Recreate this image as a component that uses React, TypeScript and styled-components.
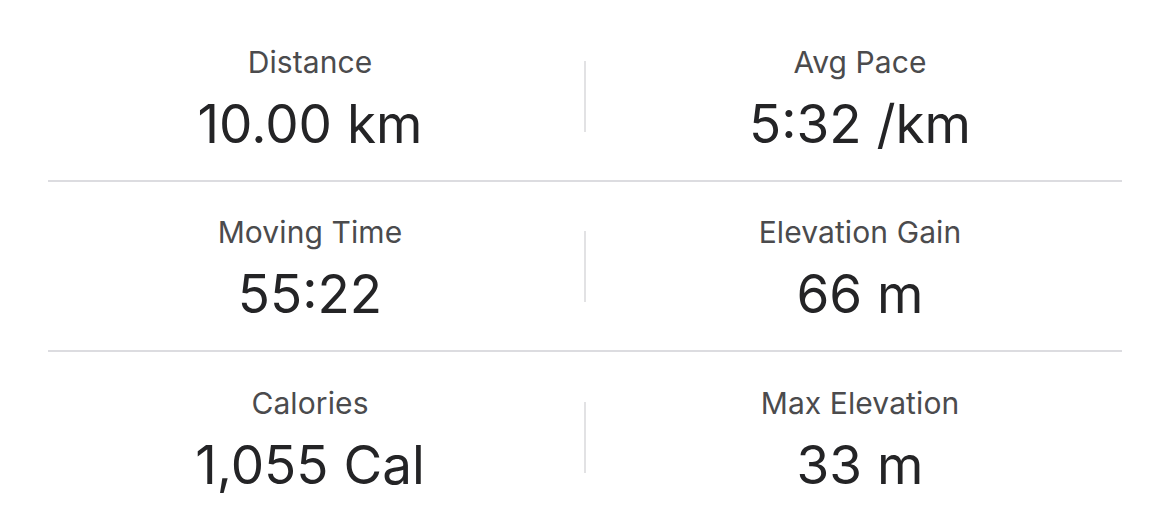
import React from 'react';
import styled, { createGlobalStyle } from 'styled-components';

const GlobalStyle = createGlobalStyle`
  html, body {
    margin: 0;
    padding: 0;
    background: #ffffff;
  }
  body {
    font-family: Inter, "Noto Sans", "Liberation Sans", sans-serif;
  }
`;

type Stat = { label: string; value: string };

const rows: [Stat, Stat][] = [
  [
    { label: 'Distance', value: '10.00 km' },
    { label: 'Avg Pace', value: '5:32 /km' },
  ],
  [
    { label: 'Moving Time', value: '55:22' },
    { label: 'Elevation Gain', value: '66 m' },
  ],
  [
    { label: 'Calories', value: '1,055 Cal' },
    { label: 'Max Elevation', value: '33 m' },
  ],
];

const Page = styled.div`
  padding: 12px 47px 0 48px;
  height: 513px;
  box-sizing: border-box;
  overflow: hidden;
`;

const Row = styled.div<{ $last?: boolean }>`
  display: grid;
  grid-template-columns: 1fr 2px 1fr;
  column-gap: 12px;
  align-items: center;
  height: 170px;
  box-sizing: border-box;
  border-bottom: ${p => (p.$last ? 'none' : '2px solid #dcdce0')};
`;

const Divider = styled.div`
  width: 2px;
  height: 71px;
  background: #e2e2e4;
`;

const Cell = styled.div`
  display: flex;
  flex-direction: column;
  align-items: center;
  gap: 14px;
  margin-top: 6px;
`;

const Label = styled.div`
  font-size: 30px;
  line-height: 36px;
  color: #4b4b4d;
  letter-spacing: 0.1px;
`;

const Value = styled.div`
  font-size: 53px;
  line-height: 60px;
  color: #242426;
`;

const StatCell = ({ stat }: { stat: Stat }) => (
  <Cell>
    <Label>{stat.label}</Label>
    <Value>{stat.value}</Value>
  </Cell>
);

export default function App() {
  return (
    <>
      <GlobalStyle />
      <Page>
        {rows.map(([left, right], i) => (
          <Row key={left.label} $last={i === rows.length - 1}>
            <StatCell stat={left} />
            <Divider />
            <StatCell stat={right} />
          </Row>
        ))}
      </Page>
    </>
  );
}
